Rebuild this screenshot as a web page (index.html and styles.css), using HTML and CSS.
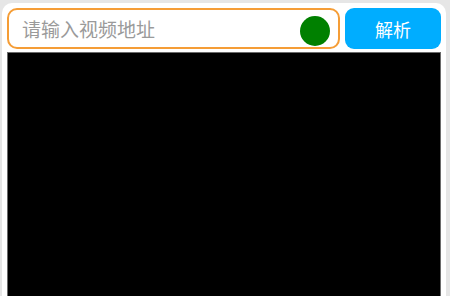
FILE: index.html
```html
<!DOCTYPE html>
<html lang="zh-CN">
<head>
    <meta charset="UTF-8">
    <meta name="viewport" content="width=device-width, initial-scale=1.0">
    <title>视频解析</title>
    <link rel="stylesheet" href="styles.css">
</head>
<body>
    <div class="card">
        <div class="bar">
            <div class="url-box">
                <input class="url" type="text" placeholder="请输入视频地址">
                <span class="dot"></span>
            </div>
            <button class="go">解析</button>
        </div>
        <div class="player"></div>
    </div>
</body>
</html>
```

FILE: styles.css
```css
html, body{
    margin: 0;
    padding: 0;
    height: 100%;
}
body{
    background-color: #e6e6e6;
    font-family: "Noto Sans CJK SC", "Noto Sans", sans-serif;
    overflow: hidden;
}
.card{
    background-color: white;
    margin: 3px 4px 0 2px;
    padding: 5px 5px 0 5px;
    border-radius: 10px 10px 0 0;
    height: calc(100% - 3px);
    box-sizing: border-box;
    display: flex;
    flex-direction: column;
    gap: 3px;
}
.bar{
    display: flex;
    gap: 5px;
    height: 41px;
}
.url-box{
    flex: 1;
    display: flex;
    align-items: center;
    border: 2px solid #f59d36;
    border-radius: 10px;
    padding: 0 8px 0 13px;
}
.url{
    flex: 1;
    min-width: 0;
    border: none;
    outline: none;
    background: transparent;
    font-family: inherit;
    font-size: 19px;
    color: #333;
    padding: 0;
}
.url::placeholder{
    color: #9a9a9a;
}
.dot{
    width: 30px;
    height: 30px;
    border-radius: 50%;
    background-color: #008000;
    margin-top: 4px;
}
.go{
    width: 96px;
    border: none;
    border-radius: 9px;
    background-color: #00adff;
    color: white;
    font-family: inherit;
    font-size: 18px;
}
.player{
    flex: 1;
    background-color: black;
    border: 1px solid #6b6b6b;
    border-bottom: none;
}
```
